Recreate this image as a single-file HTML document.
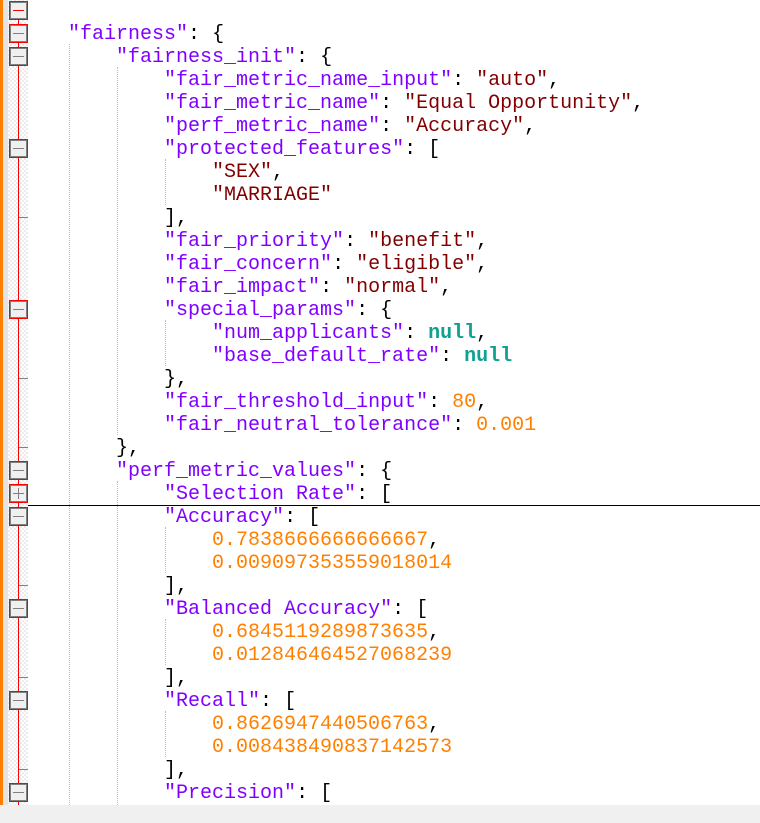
<!DOCTYPE html>
<html><head><meta charset="utf-8"><style>
body{margin:0;width:760px;height:823px;background:#f0f0f0;overflow:hidden;position:relative;font-family:"Liberation Mono","Courier New",monospace;font-size:20px}
#ed{position:absolute;left:0;top:0;width:760px;height:805px;background:#fff;overflow:hidden}
#or{position:absolute;left:0;top:0;width:3px;height:805px;background:#ff8000}
#gr{position:absolute;left:3px;top:0;width:5px;height:805px;background:#e4e4e4}
#ht{position:absolute;left:8px;top:0;width:20px;height:805px;background-color:#fff;background-image:linear-gradient(45deg,#ececec 25%,transparent 25%,transparent 75%,#ececec 75%),linear-gradient(45deg,#ececec 25%,transparent 25%,transparent 75%,#ececec 75%);background-size:4px 4px;background-position:0 0,2px 2px}
#rl{position:absolute;left:18px;top:10px;width:1px;height:800px;background:#f00}
.b{position:absolute;left:9px;width:17px;height:17px;border:1px solid #f00;background:#f0f0f0;box-shadow:inset -1px -1px 0 #808080,inset 1px 1px 0 #808080}
.b:before{content:"";position:absolute;left:3px;right:3px;top:8px;height:1px;background:#808080}
.b.r:before{background:#f00}
.b.p:after{content:"";position:absolute;top:3px;bottom:3px;left:8px;width:1px;background:#808080}
.t{position:absolute;left:19px;width:9px;height:1px;background:#808080}
.l{position:absolute;left:20px;height:23px;line-height:23px;white-space:pre;color:#000}
.g{position:absolute;width:0;height:23px;border-left:1px dotted #bbb}
.k{color:#8000ff}.s{color:#800000}.n{color:#ff8000}.nu{color:#10a090;font-weight:bold}.br{color:#000}
#sep{position:absolute;left:28px;top:505px;width:732px;height:1px;background:#000}
</style></head><body>
<div id="ed">
<div id="or"></div><div id="gr"></div><div id="ht"></div><div id="rl"></div>
<div class="b r" style="top:1px"></div>
<div class="b" style="top:24px"></div>
<div class="b" style="top:47px"></div>
<div class="b" style="top:139px"></div>
<div class="t" style="top:217px"></div>
<div class="b" style="top:300px"></div>
<div class="t" style="top:378px"></div>
<div class="t" style="top:447px"></div>
<div class="b" style="top:461px"></div>
<div class="b p" style="top:484px"></div>
<div class="b" style="top:507px"></div>
<div class="t" style="top:585px"></div>
<div class="b" style="top:599px"></div>
<div class="t" style="top:677px"></div>
<div class="b" style="top:691px"></div>
<div class="t" style="top:769px"></div>
<div class="b" style="top:783px"></div>

<div class="g" style="left:69px;top:44px;height:761px"></div>
<div class="g" style="left:117px;top:67px;height:368px"></div>
<div class="g" style="left:117px;top:481px;height:324px"></div>
<div class="g" style="left:165px;top:159px;height:46px"></div>
<div class="g" style="left:165px;top:320px;height:46px"></div>
<div class="g" style="left:165px;top:527px;height:46px"></div>
<div class="g" style="left:165px;top:619px;height:46px"></div>
<div class="g" style="left:165px;top:711px;height:46px"></div>

<div class="l" style="top:23px">    <span class="k">"fairness"</span>: <span class="br">{</span></div>
<div class="l" style="top:46px">        <span class="k">"fairness_init"</span>: <span class="br">{</span></div>
<div class="l" style="top:69px">            <span class="k">"fair_metric_name_input"</span>: <span class="s">"auto"</span>,</div>
<div class="l" style="top:92px">            <span class="k">"fair_metric_name"</span>: <span class="s">"Equal Opportunity"</span>,</div>
<div class="l" style="top:115px">            <span class="k">"perf_metric_name"</span>: <span class="s">"Accuracy"</span>,</div>
<div class="l" style="top:138px">            <span class="k">"protected_features"</span>: <span class="br">[</span></div>
<div class="l" style="top:161px">                <span class="s">"SEX"</span>,</div>
<div class="l" style="top:184px">                <span class="s">"MARRIAGE"</span></div>
<div class="l" style="top:207px">            <span class="br">]</span>,</div>
<div class="l" style="top:230px">            <span class="k">"fair_priority"</span>: <span class="s">"benefit"</span>,</div>
<div class="l" style="top:253px">            <span class="k">"fair_concern"</span>: <span class="s">"eligible"</span>,</div>
<div class="l" style="top:276px">            <span class="k">"fair_impact"</span>: <span class="s">"normal"</span>,</div>
<div class="l" style="top:299px">            <span class="k">"special_params"</span>: <span class="br">{</span></div>
<div class="l" style="top:322px">                <span class="k">"num_applicants"</span>: <span class="nu">null</span>,</div>
<div class="l" style="top:345px">                <span class="k">"base_default_rate"</span>: <span class="nu">null</span></div>
<div class="l" style="top:368px">            <span class="br">}</span>,</div>
<div class="l" style="top:391px">            <span class="k">"fair_threshold_input"</span>: <span class="n">80</span>,</div>
<div class="l" style="top:414px">            <span class="k">"fair_neutral_tolerance"</span>: <span class="n">0.001</span></div>
<div class="l" style="top:437px">        <span class="br">}</span>,</div>
<div class="l" style="top:460px">        <span class="k">"perf_metric_values"</span>: <span class="br">{</span></div>
<div class="l" style="top:483px">            <span class="k">"Selection Rate"</span>: <span class="br">[</span></div>
<div class="l" style="top:506px">            <span class="k">"Accuracy"</span>: <span class="br">[</span></div>
<div class="l" style="top:529px">                <span class="n">0.7838666666666667</span>,</div>
<div class="l" style="top:552px">                <span class="n">0.009097353559018014</span></div>
<div class="l" style="top:575px">            <span class="br">]</span>,</div>
<div class="l" style="top:598px">            <span class="k">"Balanced Accuracy"</span>: <span class="br">[</span></div>
<div class="l" style="top:621px">                <span class="n">0.6845119289873635</span>,</div>
<div class="l" style="top:644px">                <span class="n">0.012846464527068239</span></div>
<div class="l" style="top:667px">            <span class="br">]</span>,</div>
<div class="l" style="top:690px">            <span class="k">"Recall"</span>: <span class="br">[</span></div>
<div class="l" style="top:713px">                <span class="n">0.8626947440506763</span>,</div>
<div class="l" style="top:736px">                <span class="n">0.008438490837142573</span></div>
<div class="l" style="top:759px">            <span class="br">]</span>,</div>
<div class="l" style="top:782px">            <span class="k">"Precision"</span>: <span class="br">[</span></div>
<div id="sep"></div>
</div>
</body></html>
